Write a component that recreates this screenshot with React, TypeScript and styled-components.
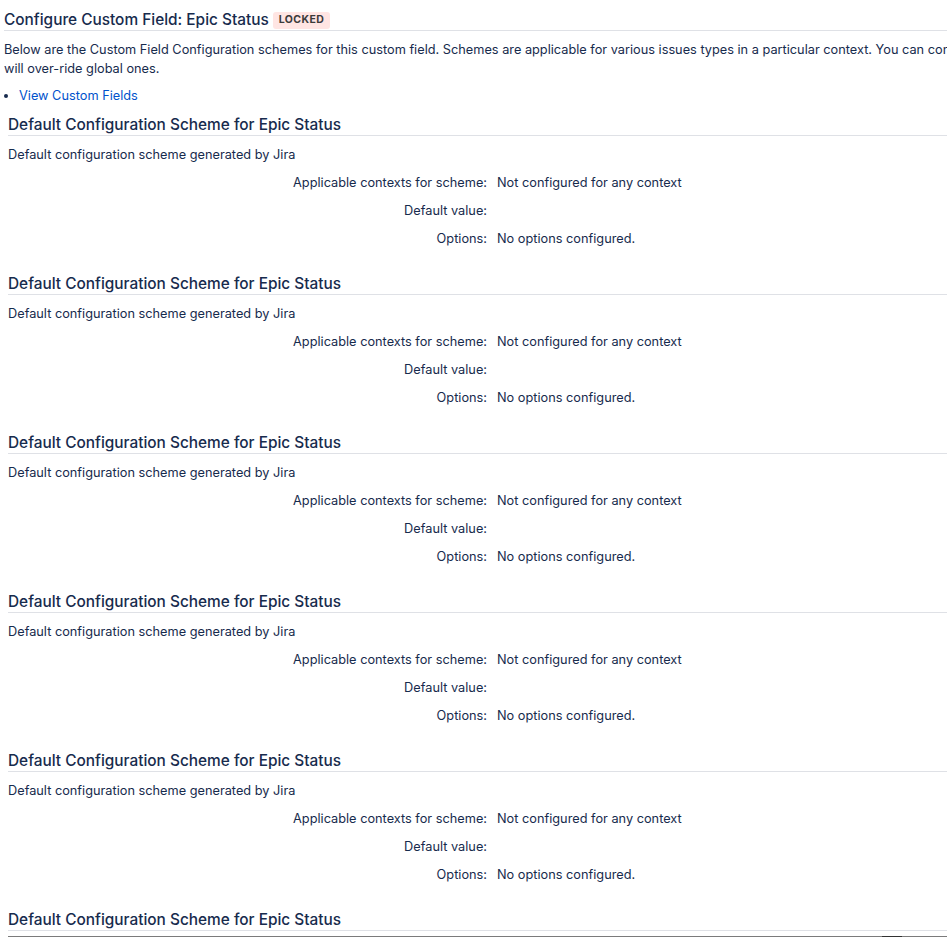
import React from "react";
import styled, { createGlobalStyle } from "styled-components";

const Global = createGlobalStyle`
  html, body { margin: 0; padding: 0; background: #fff; }
  body {
    font-family: Inter, "Noto Sans", "Liberation Sans", sans-serif;
    font-size: 12.75px;
    color: #172B4D;
    overflow: hidden;
  }
`;

const Page = styled.div`
  padding: 10px 0 0 4px;
`;

const Title = styled.h2`
  margin: 0;
  font-size: 15.4px;
  font-weight: 500;
  line-height: 20px;
  border-bottom: 1px solid #DFE1E6;
  display: flex;
  align-items: center;
  gap: 4px;
  white-space: nowrap;
`;

const Lozenge = styled.span`
  display: inline-flex;
  align-items: center;
  height: 17px;
  padding: 0 6px;
  border-radius: 3px;
  background: #FFE5E3;
  color: #3B3B3B;
  font-size: 10.5px;
  font-weight: 700;
  letter-spacing: 0.4px;
  text-transform: uppercase;
`;

const Intro = styled.p`
  margin: 9px 0 0;
  line-height: 19px;
  white-space: nowrap;
  overflow: hidden;
`;

const Links = styled.ul`
  margin: 8px 0 0;
  padding: 0 0 0 15px;
  line-height: 20px;
`;

const Link = styled.a`
  color: #0052CC;
  text-decoration: none;
`;

const Section = styled.section`
  margin: 9px 0 0 4px;
  & + & { margin-top: 21px; }
`;

const SectionHeading = styled.h3`
  margin: 0;
  font-size: 15.4px;
  font-weight: 500;
  line-height: 20px;
  border-bottom: 1px solid #DFE1E6;
`;

const Description = styled.div`
  margin-top: 9px;
  line-height: 20px;
`;

const Fields = styled.dl`
  margin: 4px 0 0;
  display: grid;
  grid-template-columns: 479px 1fr;
  column-gap: 10px;
`;

const Label = styled.dt`
  text-align: right;
  padding: 4px 0;
  line-height: 20px;
`;

const Value = styled.dd`
  margin: 0;
  padding: 4px 0;
  line-height: 20px;
`;

const ScrollTrack = styled.div`
  margin: 5px 0 0 4px;
  height: 3px;
  background: #7B7B7B;
  display: flex;
  justify-content: flex-end;
  padding-right: 45px;
`;

const ScrollThumb = styled.div`
  width: 20px;
  background: #333;
`;

const sections = Array.from({ length: 6 }, (_, i) => i);

export default function App() {
  return (
    <>
      <Global />
      <Page>
        <Title>
          Configure Custom Field: Epic Status <Lozenge>Locked</Lozenge>
        </Title>
        <Intro>
          Below are the Custom Field Configuration schemes for this custom field. Schemes are applicable for various issues types in a particular context. You can configure
          <br />
          will over-ride global ones.
        </Intro>
        <Links>
          <li>
            <Link href="#">View Custom Fields</Link>
          </li>
        </Links>
        {sections.map((i) => (
          <Section key={i}>
            <SectionHeading>Default Configuration Scheme for Epic Status</SectionHeading>
            {i < 5 && (
              <>
                <Description>Default configuration scheme generated by Jira</Description>
                <Fields>
                  <Label>Applicable contexts for scheme:</Label>
                  <Value>Not configured for any context</Value>
                  <Label>Default value:</Label>
                  <Value></Value>
                  <Label>Options:</Label>
                  <Value>No options configured.</Value>
                </Fields>
              </>
            )}
          </Section>
        ))}
        <ScrollTrack>
          <ScrollThumb />
        </ScrollTrack>
      </Page>
    </>
  );
}
